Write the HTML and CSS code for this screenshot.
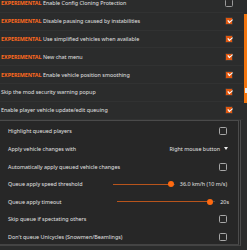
FILE: index.html
```html
<!DOCTYPE html>
<html lang="en">
<head>
    <meta charset="UTF-8">
    <meta name="viewport" content="width=device-width, initial-scale=1.0">
    <title>settings</title>
    <link rel="stylesheet" href="styles.css">
</head>
<body>
    <div class="scroll-thumb"><span></span></div>
    <div class="settings">
        <div class="row">
            <span class="label"><b class="exp">EXPERIMENTAL</b> Enable Config Cloning Protection</span>
            <span class="check"></span>
        </div>
        <div class="row">
            <span class="label"><b class="exp">EXPERIMENTAL</b> Disable pausing caused by instabilities</span>
            <span class="check on"></span>
        </div>
        <div class="row">
            <span class="label"><b class="exp">EXPERIMENTAL</b> Use simplified vehicles when available</span>
            <span class="check on"></span>
        </div>
        <div class="row">
            <span class="label"><b class="exp">EXPERIMENTAL</b> New chat menu</span>
            <span class="check on"></span>
        </div>
        <div class="row">
            <span class="label"><b class="exp">EXPERIMENTAL</b> Enable vehicle position smoothing</span>
            <span class="check on"></span>
        </div>
        <div class="row">
            <span class="label">Skip the mod security warning popup</span>
            <span class="check on"></span>
        </div>
        <div class="row">
            <span class="label">Enable player vehicle update/edit queuing</span>
            <span class="check on"></span>
        </div>

        <div class="panel">
            <div class="row">
                <span class="label">Highlight queued players</span>
                <span class="check"></span>
            </div>
            <div class="row">
                <span class="label">Apply vehicle changes with</span>
                <span class="select">Right mouse button <i class="caret"></i></span>
            </div>
            <div class="row">
                <span class="label">Automatically apply queued vehicle changes</span>
                <span class="check"></span>
            </div>
            <div class="row">
                <span class="label">Queue apply speed threshold</span>
                <span class="slider">
                    <span class="track"><span class="fill" style="width: 58px"></span><span class="knob"></span></span>
                    <span class="value">36.0 km/h (10 m/s)</span>
                </span>
            </div>
            <div class="row">
                <span class="label">Queue apply timeout</span>
                <span class="slider">
                    <span class="track long"><span class="fill" style="width: 93px"></span><span class="knob"></span></span>
                    <span class="value short">20s</span>
                </span>
            </div>
            <div class="row">
                <span class="label">Skip queue if spectating others</span>
                <span class="check"></span>
            </div>
            <div class="row">
                <span class="label">Don't queue Unicycles (Snowmen/Beamlings)</span>
                <span class="check"></span>
            </div>
        </div>
    </div>
</body>
</html>
```

FILE: styles.css
```css
* {
    margin: 0;
    padding: 0;
    box-sizing: border-box;
    font-family: 'Noto Sans', sans-serif;
}

body {
    background-color: #2b2c2c;
    color: #e2e2e2;
    width: 247px;
    height: 250px;
    overflow: hidden;
    position: relative;
}

.settings {
    margin-top: -5px;
    width: 243px;
}

.row {
    height: 17.8px;
    display: flex;
    align-items: center;
    justify-content: space-between;
    padding: 0 10px 0 1px;
    font-size: 5.4px;
    border-bottom: 1px solid rgba(255, 255, 255, 0.03);
}

.label {
    white-space: nowrap;
}

.exp {
    color: #ff6a1f;
    font-weight: 700;
}

.check {
    width: 8px;
    height: 8px;
    border: 1.3px solid #9a9a9a;
    border-radius: 1.5px;
    background-color: #2a2a2a;
    position: relative;
}

.check.on {
    background-color: #e0570f;
    border-color: #3a3a3a;
}

.check.on::after {
    content: "";
    position: absolute;
    left: 1.6px;
    top: 0.6px;
    width: 3px;
    height: 1.6px;
    border-left: 1.2px solid #fff;
    border-bottom: 1.2px solid #fff;
    transform: rotate(-40deg) scaleX(1.2);
}

.panel {
    border-top: 1px solid #4a4a4a;
    border-right: 3px double #4c4c4c;
    border-bottom: 2px solid #444;
    background-color: #272727;
    width: 241px;
    height: 126px;
    padding-top: 2px;
}

.panel .row {
    padding: 0 11px 0 8px;
    height: 17.6px;
    border-bottom: none;
}

.panel .check {
    background-color: transparent;
    border-color: #a8a8a8;
}

.select {
    display: flex;
    align-items: center;
    gap: 4px;
    margin-right: -1px;
    white-space: nowrap;
}

.caret {
    width: 0;
    height: 0;
    border-left: 2.5px solid transparent;
    border-right: 2.5px solid transparent;
    border-top: 3px solid #eee;
}

.slider {
    display: flex;
    align-items: center;
    gap: 5px;
}

.track {
    width: 62px;
    height: 1.2px;
    background-color: #4a4a4a;
    position: relative;
    display: flex;
    align-items: center;
}

.track.long {
    width: 98px;
}

.fill {
    height: 1.2px;
    background-color: #b8541c;
}

.knob {
    width: 6px;
    height: 6px;
    border-radius: 50%;
    background-color: #ff6a10;
    margin-left: -3px;
}

.value {
    white-space: nowrap;
}

.value.short {
    margin-right: -2px;
}

.scroll-thumb {
    position: absolute;
    right: 0;
    top: 14px;
    width: 3px;
    height: 89px;
    background-color: #f2750f;
}

.scroll-thumb span {
    position: absolute;
    left: 1px;
    top: 74px;
    width: 2px;
    height: 5px;
    background-color: #f0f0f0;
}
```
